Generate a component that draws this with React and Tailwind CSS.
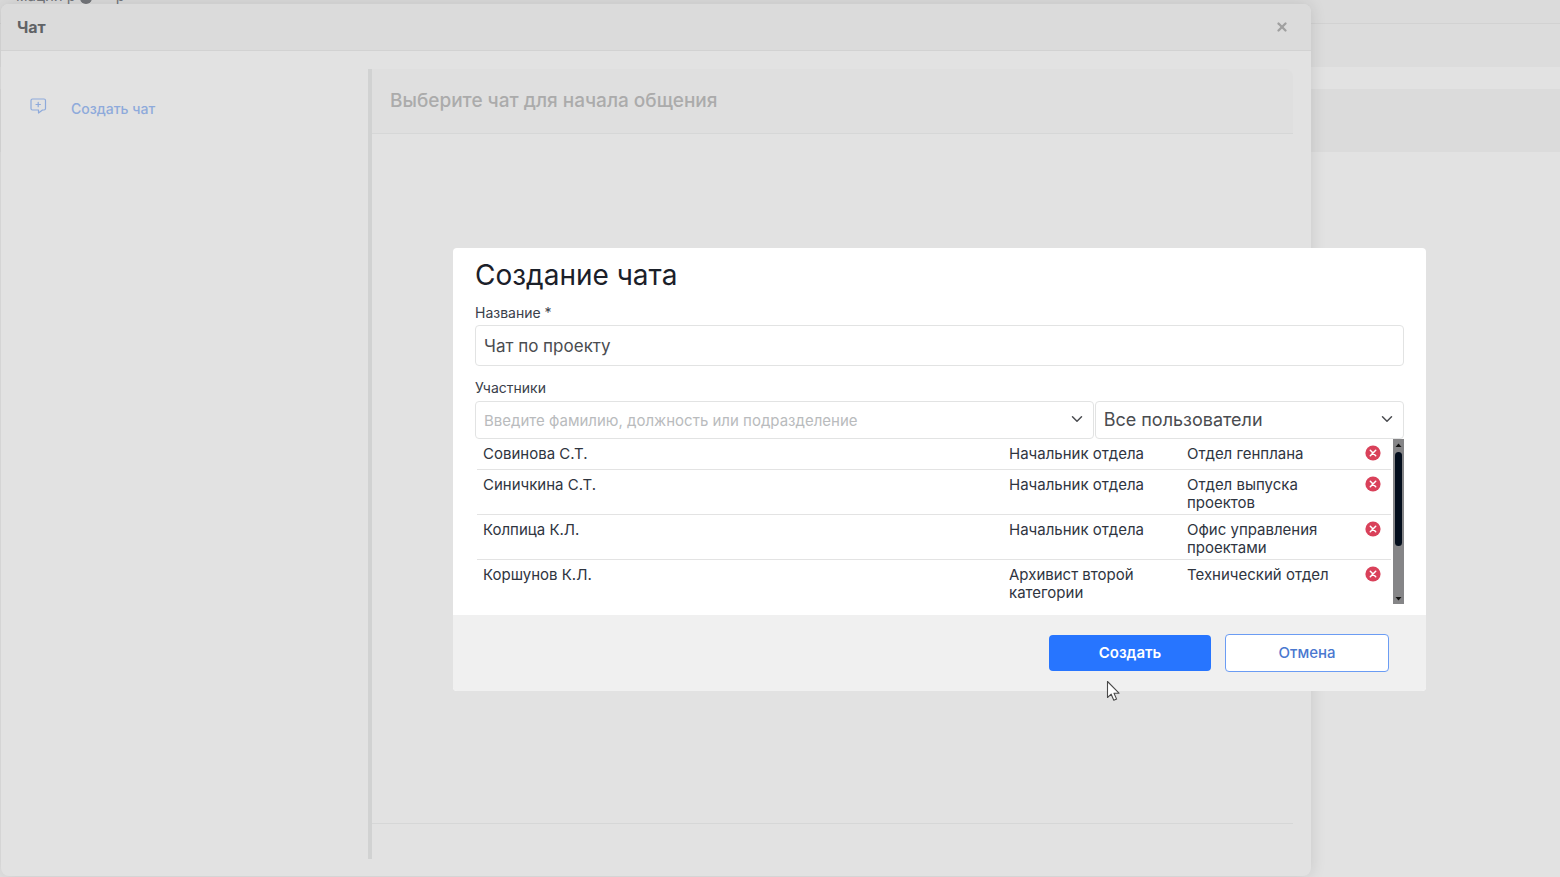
import React, { useState } from 'react'
import { ChevronDown, X } from 'lucide-react'

const MEMBERS = [
  { name: 'Совинова С.Т.', position: 'Начальник отдела', department: 'Отдел генплана' },
  { name: 'Синичкина С.Т.', position: 'Начальник отдела', department: 'Отдел выпуска проектов' },
  { name: 'Колпица К.Л.', position: 'Начальник отдела', department: 'Офис управления проектами' },
  { name: 'Коршунов К.Л.', position: 'Архивист второй категории', department: 'Технический отдел' }
]

function NewChatIcon({ className }) {
  return (
    <svg viewBox="0 0 18 18" fill="none" stroke="currentColor" strokeLinecap="round" strokeLinejoin="round" className={className} aria-hidden>
      <path d="M9.500 13H3.500A1.500 1.500 0 0 1 2 11.500V3.500A1.500 1.500 0 0 1 3.500 2H15A1.500 1.500 0 0 1 16.500 3.500V11.500A1.500 1.500 0 0 1 15 13H13.500L9.500 16V13" strokeWidth="1.2" />
      <path d="M9.200 5.300v4.400M7 7.500h4.400" strokeWidth="1.2" />
    </svg>
  )
}

function RemoveIcon({ className }) {
  return (
    <svg viewBox="0 0 16 16" className={className} aria-hidden>
      <circle cx="8" cy="8" r="7.6" fill="#d9415a" />
      <path d="M5.300 5.300l5.400 5.400M10.700 5.300l-5.400 5.400" stroke="#fff" strokeWidth="1.5" strokeLinecap="round" />
    </svg>
  )
}

function PageBackdrop() {
  return (
    <div>
      <div className="flex h-6 items-start overflow-hidden border-b border-[#d2d2d2] bg-[#dbdbdb] pl-4 text-[#74777b]">
        <span className="-mt-4 text-[15px] leading-6">мации</span>
        <span className="-mt-4 ml-1 text-[15px] leading-6">р</span>
        <span className="-mt-2 ml-1 h-3 w-3 rounded-full bg-[#74777b]" />
        <span className="-mt-4 ml-6 text-[15px] leading-6">р</span>
      </div>
      <div className="h-[43px] bg-[#dcdcdc]" />
      <div className="h-[22px]" />
      <div className="h-[63px] bg-[#dbdbdb]" />
    </div>
  )
}

function ChatWindow() {
  return (
    <section className="absolute top-1 bottom-px left-px flex w-[84%] flex-col overflow-hidden rounded-lg bg-[#e2e2e2] shadow-[0_0_16px_rgba(0,0,0,0.12)]">
      <header className="flex h-[47px] shrink-0 items-center justify-between border-b border-[#d2d2d2] bg-[#dbdbdb] pr-[22px] pb-px pl-4">
        <h1 className="text-base font-bold text-[#606366]">Чат</h1>
        <button type="button" aria-label="Закрыть" className="text-[#a0a0a0]">
          <X className="h-[14px] w-[14px]" strokeWidth={4} />
        </button>
      </header>
      <div className="flex min-h-0 flex-1 pt-[18px] pr-[18px] pb-[17px]">
        <aside className="w-[367px] shrink-0 pt-6 pl-7">
          <button type="button" className="flex items-start gap-6 text-[14px] leading-8 font-medium text-[#8eaadb]">
            <NewChatIcon className="mt-1 h-[18px] w-[18px]" />
            Создать чат
          </button>
        </aside>
        <main className="flex flex-1 flex-col border-l-4 border-[#d1d2d2]">
          <div className="flex h-[65px] items-center rounded-tr-lg border-b border-[#d6d7d7] bg-[#dfdfdf] px-[18px]">
            <h2 className="text-[19px] font-medium text-[#ababab]">Выберите чат для начала общения</h2>
          </div>
          <div className="flex-1" />
          <div className="h-9 border-t border-[#d6d7d7]" />
        </main>
      </div>
    </section>
  )
}

function MembersTable({ members, onRemove }) {
  return (
    <div className="flex justify-between">
      <div className="flex-1 pr-[2px] pl-[2px]">
        <table className="w-full table-fixed text-left text-[15px] leading-[18px] text-[#2f353f]">
          <colgroup>
            <col />
            <col className="w-[178px]" />
            <col className="w-[178px]" />
            <col className="w-[34px]" />
          </colgroup>
          <tbody>
            {members.map((member) => (
              <tr key={member.name} className="border-b border-[#e3e3e3] align-top last:border-b-0">
                <td className="px-[6px] pt-[6px] pb-[2px]">{member.name}</td>
                <td className="pt-[6px] pr-4 pb-[2px] pl-2">{member.position}</td>
                <td className="pt-[6px] pr-4 pb-[2px] pl-2">{member.department}</td>
                <td className="px-2 pt-[6px] pb-[2px]">
                  <button
                    type="button"
                    aria-label={`Удалить: ${member.name}`}
                    className="flex h-[22px] items-start"
                    onClick={() => onRemove(member.name)}
                  >
                    <RemoveIcon className="h-4 w-4" />
                  </button>
                </td>
              </tr>
            ))}
          </tbody>
        </table>
      </div>
      <div className="flex w-[11px] flex-col items-center bg-[#858587]" aria-hidden>
        <svg viewBox="0 0 11 13" className="h-[13px] w-[11px]">
          <path d="M5.500 4.500L8.500 8h-6z" fill="#111" />
        </svg>
        <div className="h-[94px] w-[7px] rounded-sm bg-[#020d1c]" />
        <div className="flex-1" />
        <svg viewBox="0 0 11 11" className="h-[11px] w-[11px]">
          <path d="M5.500 7.500L2.500 4h6z" fill="#111" />
        </svg>
      </div>
    </div>
  )
}

function CreateChatDialog() {
  const [title, setTitle] = useState('Чат по проекту')
  const [members, setMembers] = useState(MEMBERS)

  const removeMember = (name) => setMembers((list) => list.filter((item) => item.name !== name))

  return (
    <div role="dialog" aria-labelledby="dialog-title" className="absolute top-[248px] right-[134px] left-[453px] overflow-hidden rounded-sm bg-white">
      <div className="px-[22px] pt-2 pb-[11px]">
        <h2 id="dialog-title" className="text-[28px] leading-[38px] text-[#1b2029]">Создание чата</h2>
        <label htmlFor="chat-title" className="mt-[9px] block pb-[3px] text-[14px] leading-[19px] text-[#3a404a]">
          Название *
        </label>
        <input
          id="chat-title"
          value={title}
          onChange={(e) => setTitle(e.target.value)}
          className="block h-[41px] w-full rounded-sm border border-[#e2e3e3] px-2 text-[17px] text-[#4a4c50] outline-none"
        />
        <label htmlFor="chat-members" className="mt-3 block pb-[4px] text-[14px] leading-[19px] text-[#3a404a]">
          Участники
        </label>
        <div className="flex gap-px">
          <div className="relative flex-2">
            <input
              id="chat-members"
              placeholder="Введите фамилию, должность или подразделение"
              className="block h-[38px] w-full rounded-sm border border-[#e2e3e3] pr-9 pl-2 text-[15px] outline-none placeholder:text-[#b9bbbd]"
            />
            <ChevronDown className="pointer-events-none absolute top-[9px] right-2 h-[18px] w-[18px] text-[#4a4c50]" aria-hidden />
          </div>
          <div className="relative flex-1">
            <select
              aria-label="Фильтр пользователей"
              className="block h-[38px] w-full appearance-none rounded-sm border border-[#e2e3e3] bg-white pr-9 pl-2 text-lg text-[#4a4c50] outline-none"
            >
              <option>Все пользователи</option>
            </select>
            <ChevronDown className="pointer-events-none absolute top-[9px] right-2 h-[18px] w-[18px] text-[#4a4c50]" aria-hidden />
          </div>
        </div>
        <MembersTable members={members} onRemove={removeMember} />
      </div>
      <footer className="flex h-[76px] items-center justify-end gap-[14px] bg-[#f0f0f0] pr-[37px]">
        <button type="button" className="h-9 w-[162px] rounded-sm bg-[#2775ff] text-[15px] font-semibold text-white">
          Создать
        </button>
        <button type="button" className="h-[38px] w-[164px] rounded-sm border border-[#6b9cf3] bg-white text-[15px] font-medium text-[#4a78cf]">
          Отмена
        </button>
      </footer>
    </div>
  )
}

function Pointer() {
  return (
    <svg viewBox="0 0 14 22" className="pointer-events-none absolute top-[680px] left-[1106px] h-[22px] w-[14px]" aria-hidden>
      <path
        d="M1.500 1.500V17.500L5.200 14.200L7.800 20.300L10.600 19.100L8 13.200H13z"
        fill="#fff"
        stroke="#4a4a4a"
        strokeWidth="1.1"
        strokeLinejoin="round"
      />
    </svg>
  )
}

export default function App() {
  return (
    <div className="relative h-screen overflow-hidden bg-[#e2e2e2] font-['Inter',sans-serif]">
      <PageBackdrop />
      <ChatWindow />
      <CreateChatDialog />
      <Pointer />
    </div>
  )
}
